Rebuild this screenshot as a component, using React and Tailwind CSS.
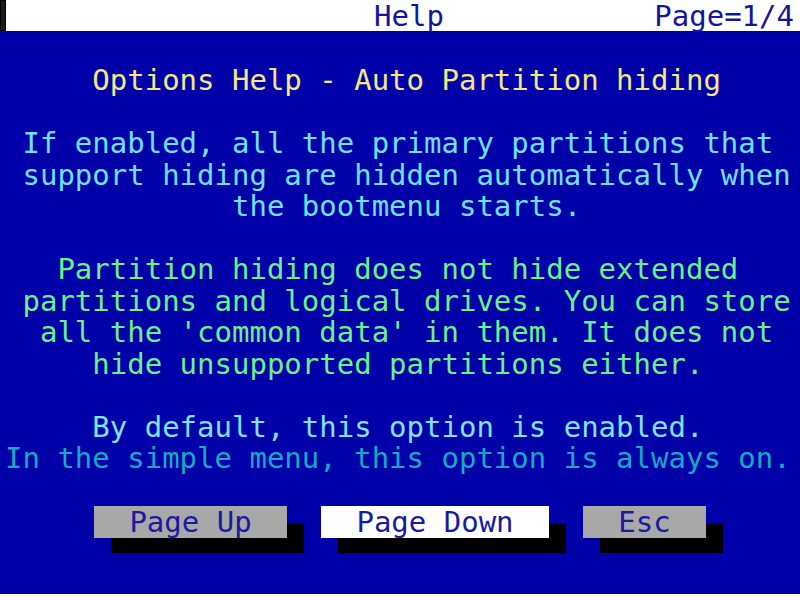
import React from "react";

// Text-mode help screen: 45 columns of monospace cells, 31.5px rows.
const lines = [
  { text: "", color: "" },
  { text: "     Options Help - Auto Partition hiding", color: "text-[#f4e884]" },
  { text: "", color: "" },
  { text: " If enabled, all the primary partitions that", color: "text-[#70e0ff]" },
  { text: " support hiding are hidden automatically when", color: "text-[#70e0ff]" },
  { text: "             the bootmenu starts.", color: "text-[#70e0ff]" },
  { text: "", color: "" },
  { text: "   Partition hiding does not hide extended", color: "text-[#6cf08c]" },
  { text: " partitions and logical drives. You can store", color: "text-[#6cf08c]" },
  { text: "  all the 'common data' in them. It does not", color: "text-[#6cf08c]" },
  { text: "     hide unsupported partitions either.", color: "text-[#6cf08c]" },
  { text: "", color: "" },
  { text: "     By default, this option is enabled.", color: "text-[#7ee4ff]" },
  { text: "In the simple menu, this option is always on.", color: "text-[#18a8c4]" },
  { text: "", color: "" },
];

function DosButton({ label, width, active }) {
  return (
    <div className="relative h-[32px]" style={{ width }}>
      <div className="absolute left-[17px] top-[17px] w-full h-[30px] bg-black" />
      <div
        className={`relative h-full w-full flex items-center justify-center leading-[32px] text-[#1a1aa0] ${
          active ? "bg-white" : "bg-[#a8a8a8]"
        }`}
      >
        <span className="whitespace-pre">{label}</span>
      </div>
    </div>
  );
}

export default function App() {
  return (
    <div className="w-[800px] h-[600px] flex flex-col bg-white overflow-hidden font-['DejaVu_Sans_Mono',monospace] text-[29px]">
      {/* status bar */}
      <div className="relative h-[31px] shrink-0 flex bg-white text-[#14149c] leading-[33px]">
        <span className="absolute left-0 top-0 w-[6px] h-[31px] bg-[#1a1a1a] border border-black" />
        <span className="ml-[374px] whitespace-pre">Help</span>
        <span className="ml-auto mr-[6px] whitespace-pre">Page=1/4</span>
      </div>

      {/* help body */}
      <div className="h-[563px] shrink-0 bg-[#0000a8] pt-[2.5px] pl-[5px] flex flex-col">
        {lines.map((l, i) => (
          <div key={i} className={`h-[31.5px] leading-[31.5px] whitespace-pre ${l.color}`}>
            {l.text}
          </div>
        ))}
        <div className="flex ml-[89px] gap-[34px]">
          <DosButton label="Page Up" width={193} />
          <DosButton label="Page Down" width={228} active />
          <DosButton label="Esc" width={123} />
        </div>
      </div>
    </div>
  );
}
